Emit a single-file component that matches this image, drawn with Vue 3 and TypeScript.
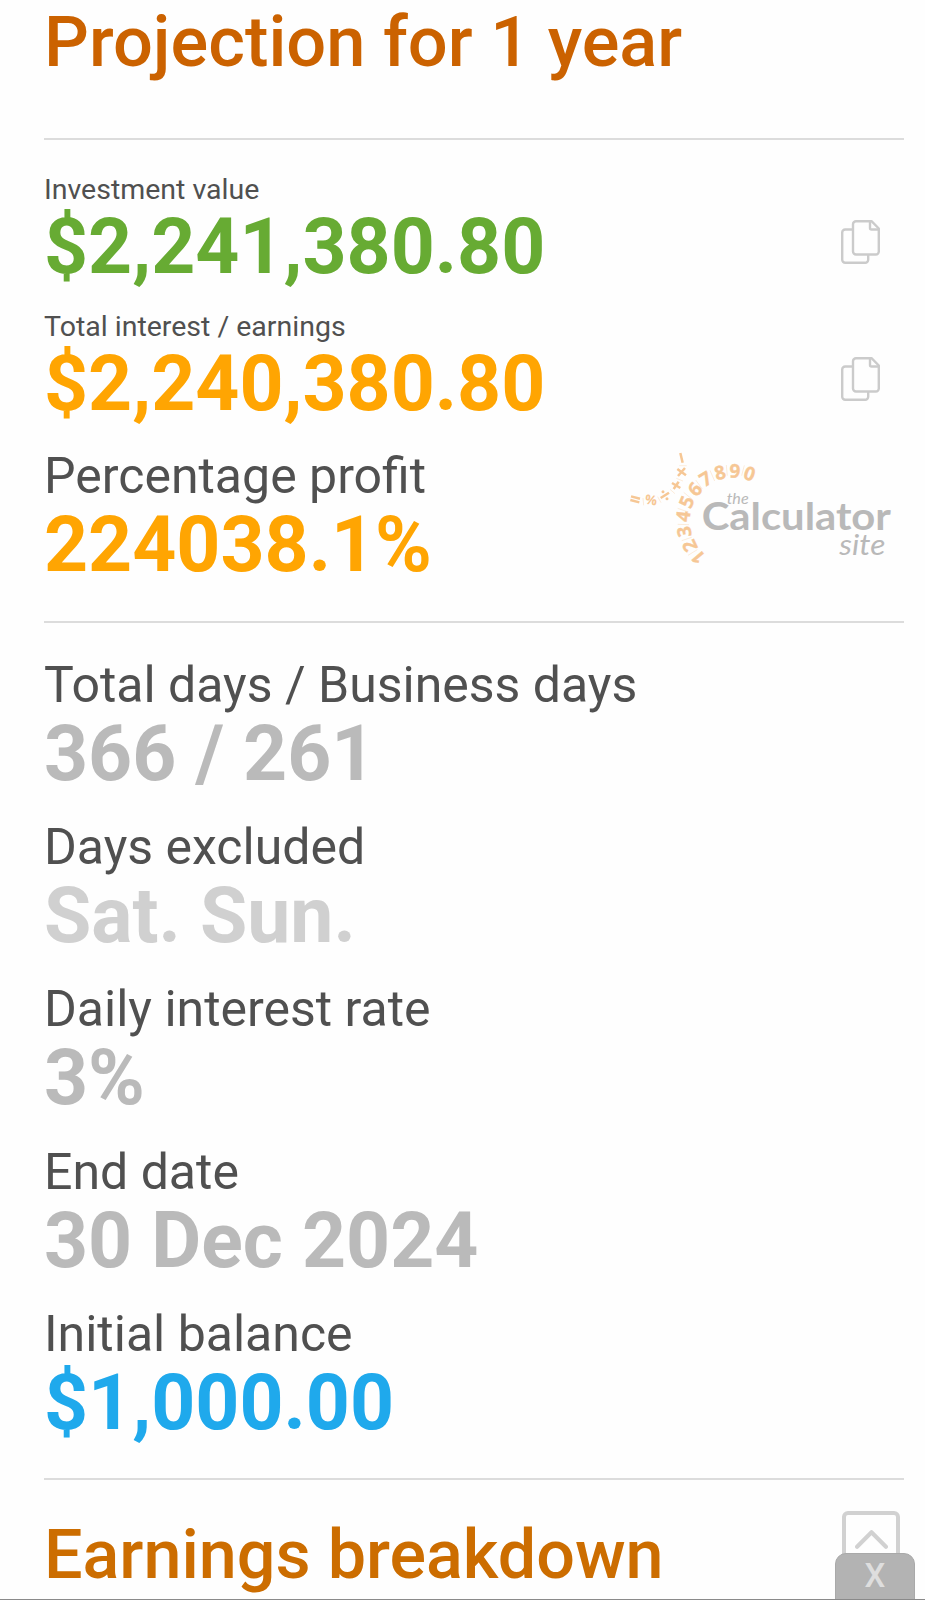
<script setup lang="ts">
interface Stat {
  label: string
  value: string
  tone: string
}

interface Glyph {
  char: string
  x: number
  y: number
  turn: number
}

const amounts: Stat[] = [
  { label: 'Investment value', value: '$2,241,380.80', tone: 'green' },
  { label: 'Total interest / earnings', value: '$2,240,380.80', tone: 'amber' },
]

const stats: Stat[] = [
  { label: 'Total days / Business days', value: '366 / 261', tone: 'grey' },
  { label: 'Days excluded', value: 'Sat. Sun.', tone: 'pale' },
  { label: 'Daily interest rate', value: '3%', tone: 'grey' },
  { label: 'End date', value: '30 Dec 2024', tone: 'grey' },
  { label: 'Initial balance', value: '$1,000.00', tone: 'blue' },
]

const digits: Glyph[] = [
  { char: '1', x: 263, y: 352, turn: -130 },
  { char: '2', x: 238, y: 318, turn: -115 },
  { char: '3', x: 221, y: 275, turn: -99 },
  { char: '4', x: 218, y: 229, turn: -83 },
  { char: '5', x: 228, y: 186, turn: -67 },
  { char: '6', x: 253, y: 148, turn: -49 },
  { char: '7', x: 285, y: 117, turn: -31 },
  { char: '8', x: 328, y: 98, turn: -15 },
  { char: '9', x: 373, y: 93, turn: 2 },
  { char: '0', x: 417, y: 101, turn: 19 },
]
</script>

<template>
  <main class="page">
    <h2 class="title">Projection for 1 year</h2>
    <hr class="rule" />

    <section class="amounts">
      <div v-for="item in amounts" :key="item.label" class="row">
        <div>
          <div class="label small">{{ item.label }}</div>
          <div class="value" :class="item.tone">{{ item.value }}</div>
        </div>
        <svg class="copy" viewBox="0 0 39 44" fill="none" stroke="#cbcbcb" stroke-width="2.400" stroke-linejoin="round">
          <path d="M11.500 9.500H4.200a3 3 0 0 0-3 3V39.800a3 3 0 0 0 3 3h20a3 3 0 0 0 3-3v-5" />
          <path d="M15 1.200h15.500L37.800 8.500V31.500a3 3 0 0 1-3 3H15a3 3 0 0 1-3-3V4.200a3 3 0 0 1 3-3z" />
          <path d="M29 1.500V8a1.500 1.500 0 0 0 1.500 1.500H37.500" />
        </svg>
      </div>

      <div class="row">
        <div>
          <div class="label">Percentage profit</div>
          <div class="value amber">224038.1%</div>
        </div>
        <svg class="logo" viewBox="40 30 820 350">
          <g class="arc">
            <text
              v-for="g in digits"
              :key="g.char"
              :transform="`translate(${g.x} ${g.y}) rotate(${g.turn})`"
              y="20"
            >{{ g.char }}</text>
          </g>
          <g stroke="#f6c795" stroke-width="7.500" fill="none">
            <path d="M61 169l27 7M59 180l27 7" />
            <path d="M150 174l25-16M184 129l25 15M189 147l15-22M200 87l26 19M223 84l-21 24M209 39l7 29" />
          </g>
          <circle cx="157" cy="155" r="4.500" fill="#f6c795" />
          <circle cx="169" cy="176" r="4.500" fill="#f6c795" />
          <text class="percent" transform="translate(121 180) rotate(8)" y="14">%</text>
          <g stroke="#fae3c9" stroke-width="2">
            <path d="M97 174l2 22M141 170l10 18M178 148l15 13M197 115l20 8M206 77h22" />
            <path d="M232 346l28-17M213 302l30-10M201 253l34 1M201 205l32 11M219 157l26 21M255 120l20 27M298 91l14 32M347 75l3 32M401 76l-8 31" />
          </g>
          <text class="thin" x="348" y="191" font-size="44" textLength="66" lengthAdjust="spacingAndGlyphs">the</text>
          <text class="name" x="273" y="269" font-size="114" textLength="568" lengthAdjust="spacingAndGlyphs">Calculator</text>
          <text class="thin" x="686" y="344" font-size="86" textLength="138" lengthAdjust="spacingAndGlyphs">site</text>
        </svg>
      </div>
    </section>
    <hr class="rule" />

    <section class="stats">
      <div v-for="item in stats" :key="item.label">
        <div class="label">{{ item.label }}</div>
        <div class="value" :class="item.tone">{{ item.value }}</div>
      </div>
    </section>
    <hr class="rule" />

    <h2 class="title lower">Earnings breakdown</h2>

    <div class="to-top">
      <svg viewBox="0 0 32 19" fill="none" stroke="#d1d1d1" stroke-width="4" stroke-linecap="round" stroke-linejoin="round">
        <path d="M2 17L16 3l14 14" />
      </svg>
    </div>
    <div class="close">X</div>
    <div class="edge"></div>
  </main>
</template>

<style>
body {
  background: #fefefe;
}
</style>

<style scoped>
.page {
  position: relative;
  box-sizing: border-box;
  width: 925px;
  height: 1600px;
  padding: 0 21px 0 44px;
  overflow: hidden;
  background: #fefefe;
  font-family: Roboto, "Liberation Sans", sans-serif;
  color: #505050;
}
.title {
  margin: 0;
  font-size: 70.400px;
  line-height: 84px;
  font-weight: 500;
  color: #cb6200;
}
.title:first-child {
  height: 138.400px;
}
.rule {
  height: 2px;
  margin: 0;
  border: 0;
  background: #dcdcdc;
}
.amounts {
  display: flex;
  flex-direction: column;
  gap: 22.400px;
  padding-top: 31.300px;
  height: 449.700px;
}
.row {
  display: flex;
  align-items: flex-start;
  justify-content: space-between;
}
.label {
  font-size: 50px;
  line-height: 60px;
  white-space: nowrap;
}
.label.small {
  font-size: 28.500px;
  line-height: 36px;
}
.value {
  font-size: 76.900px;
  line-height: 79px;
  font-weight: 700;
  white-space: nowrap;
}
.green { color: #67ab33; }
.amber { color: #ffa502; }
.grey { color: #bababa; }
.pale { color: #d0d0d0; }
.blue { color: #1fa9ec; }
.copy {
  width: 39px;
  height: 44px;
  margin: 48px 24px 0 0;
}
.logo {
  width: 273.300px;
  height: 116.700px;
  margin: 3.500px 7px 0 0;
}
.arc text {
  font: 700 57px "Open Sans", sans-serif;
  fill: #f6c795;
  stroke: #f6c795;
  stroke-width: 1px;
  text-anchor: middle;
}
.percent {
  font: 700 40px "Open Sans", sans-serif;
  fill: #f6c795;
  text-anchor: middle;
}
.name {
  font-family: Lato, sans-serif;
  font-weight: 700;
  fill: #b9b9b9;
}
.thin {
  font-family: Lato, sans-serif;
  font-style: italic;
  fill: #b9b9b9;
}
.stats {
  display: flex;
  flex-direction: column;
  gap: 23.300px;
  padding-top: 31.500px;
  height: 823px;
}
.lower {
  padding-top: 33px;
  font-size: 68.250px;
  color: #cc6d00;
}
.to-top {
  position: absolute;
  left: 842px;
  top: 1511px;
  box-sizing: border-box;
  width: 58px;
  height: 58px;
  border: 4px solid #d1d1d1;
  border-radius: 6px;
  display: flex;
  justify-content: center;
  padding-top: 14px;
}
.to-top svg {
  width: 33px;
  height: 20px;
}
.close {
  position: absolute;
  left: 835px;
  top: 1553px;
  box-sizing: border-box;
  width: 80px;
  height: 47px;
  border: 1px solid #a9a9a9;
  border-radius: 11px 11px 0 0;
  background: #b3b3b3;
  color: #dedede;
  font-size: 33px;
  font-weight: 500;
  line-height: 43px;
  text-align: center;
}
.edge {
  position: absolute;
  left: 0;
  right: 0;
  bottom: 0;
  height: 1px;
  background: #8a8a8a;
}
</style>
